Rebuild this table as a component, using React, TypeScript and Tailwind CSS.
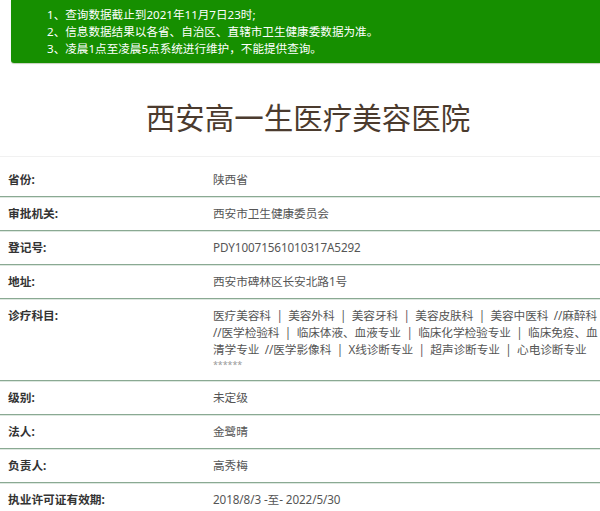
import React from "react";

interface Row {
  label: string;
  value: React.ReactNode;
}

const rows: Row[] = [
  { label: "省份:", value: "陕西省" },
  { label: "审批机关:", value: "西安市卫生健康委员会" },
  { label: "登记号:", value: "PDY10071561010317A5292" },
  { label: "地址:", value: "西安市碑林区长安北路1号" },
  {
    label: "诊疗科目:",
    value: (
      <div className="whitespace-nowrap [word-spacing:2.5px]">
        <div>医疗美容科 | 美容外科 | 美容牙科 | 美容皮肤科 | 美容中医科 //麻醉科</div>
        <div>//医学检验科 | 临床体液、血液专业 | 临床化学检验专业 | 临床免疫、血</div>
        <div>清学专业 //医学影像科 | X线诊断专业 | 超声诊断专业 | 心电诊断专业</div>
        <div className="text-[9px] leading-[14px] text-[#999]">******</div>
      </div>
    ),
  },
  { label: "级别:", value: "未定级" },
  { label: "法人:", value: "金鹭晴" },
  { label: "负责人:", value: "高秀梅" },
  { label: "执业许可证有效期:", value: "2018/8/3 -至- 2022/5/30" },
];

export default function App() {
  return (
    <div className="w-[600px] h-[511px] overflow-hidden bg-white font-['Noto_Sans','Noto_Sans_CJK_SC',sans-serif]">
      {/* notice box */}
      <div className="ml-[11px] h-[63px] bg-[#168f00] rounded-bl-[3px] pl-[36px] pt-[6px] text-white text-[11.6px] leading-[17px] shadow-[0_1px_1px_#c5d0bd]">
        <p>1、查询数据截止到2021年11月7日23时;</p>
        <p>2、信息数据结果以各省、自治区、直辖市卫生健康委数据为准。</p>
        <p>3、凌晨1点至凌晨5点系统进行维护，不能提供查询。</p>
      </div>

      {/* title */}
      <h1 className="mt-[37px] pl-[16px] text-center text-[29.5px] leading-[36px] text-[#4b3b2e]">
        西安高一生医疗美容医院
      </h1>
      <div className="mt-[20px] mb-[6px] h-px bg-[#f1f1f1]" />

      {/* detail rows */}
      <div>
        {rows.map((row) => (
          <div
            key={row.label}
            className="flex border-b border-[#8aa993] shadow-[0_1px_0_#dde8e0] text-[11.7px] leading-[17px] py-[8px]"
          >
            <div className="w-[213px] shrink-0 pl-[8px] font-bold text-[#333]">{row.label}</div>
            <div className="flex-1 text-[#555] tracking-[-0.1px]">{row.value}</div>
          </div>
        ))}
      </div>
    </div>
  );
}
